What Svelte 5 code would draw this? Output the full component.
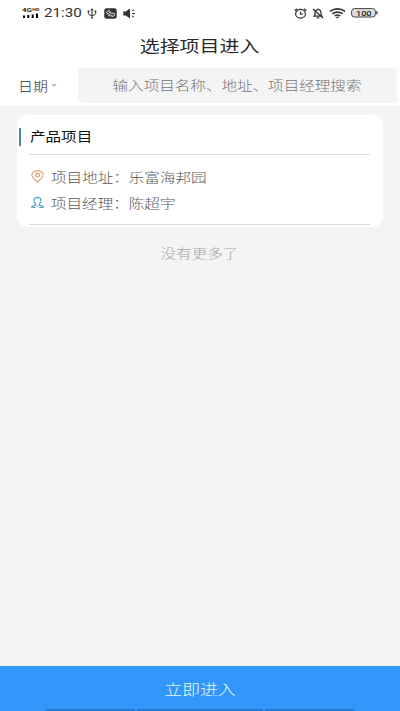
<script>
  const project = {
    name: '产品项目',
    address: '乐富海邦园',
    manager: '陈超宇'
  };
</script>

<main class="screen">
  <header class="status">
    <svg class="signal" width="18" height="12" viewBox="0 0 18 12">
      <text x="0" y="5" font-size="5.6" font-weight="700" textLength="10" lengthAdjust="spacingAndGlyphs">4G</text>
      <text x="10.3" y="4.2" font-size="4.2" font-weight="700" textLength="7" lengthAdjust="spacingAndGlyphs">HD</text>
      <path d="M1 8.4h2V11H1zM5.3 8h2v3h-2zM9.7 7.4h2V11h-2zM14 6.4h2V11h-2z" />
    </svg>
    <span class="clock"><span>21:30</span></span>
    <svg class="usb" width="10" height="11" viewBox="0 0 10 11" fill="none" stroke="#333" stroke-width="1">
      <path d="M5 1v9M1.4 3.5v2.2q0 1.6 3.6 1.8M8.6 3.5v2.2Q8.6 7.3 5 7.5" />
      <path d="M3.8 2.2 5 .5l1.2 1.7zM.8 2.8h1.4v1H.8zM7.8 2.8h1.4v1H7.8zM4.3 9.3h1.4v1H4.3z" fill="#333" stroke-width=".4" />
    </svg>
    <svg class="app" width="13" height="11" viewBox="0 0 13 11">
      <rect x=".3" y=".3" width="12.4" height="10.4" rx="2.3" fill="#333" />
      <g fill="none" stroke="#ddd" stroke-width=".9">
        <path d="M2.5 5.2Q2.7 2.6 5 2.5q1.6.3 1.4 2.6L4.6 3.8M2.4 5.2l3 .8.6 2.2M6.4 5.1l3.9.2q.8 1.7-.6 2.9-1.8.8-2.9-.6l1.9-.7M4 6.6l1 1.8" />
      </g>
    </svg>
    <svg class="sound" width="13" height="11" viewBox="0 0 13 11" fill="#333">
      <path d="M.3 3.5h2.4L7 .5v10l-4.3-3H.3z" />
      <path d="M8.8 3 11 1.7M9 5.5h3M8.8 8 11 9.3" fill="none" stroke="#333" stroke-width="1" />
    </svg>
    <span class="grow"></span>
    <svg class="alarm" width="13" height="11" viewBox="0 0 13 11" fill="none" stroke="#333" stroke-width="1.2">
      <ellipse cx="6.5" cy="5.8" rx="4.9" ry="4.4" />
      <path d="M6.5 3.4v2.7h2.3M.6 2.8 3 .8M12.4 2.8 10 .8" />
    </svg>
    <svg class="bell" width="12" height="11" viewBox="0 0 12 11" fill="none" stroke="#333" stroke-width="1.2">
      <path d="M2 8.2h8L9 6.8V4.5Q9 1.8 6 1.5 3 1.8 3 4.5v2.3zM4.8 9.8h2.4M6 .4v1M.9 1l10.2 9" />
    </svg>
    <svg class="wifi" width="17" height="11" viewBox="0 0 17 11" fill="none" stroke="#333" stroke-width="1.6">
      <path d="M.8 3.4q7.7-5 15.4 0M3.3 5.7q5.2-3.2 10.4 0M5.7 7.9q2.8-1.7 5.6 0" />
      <path d="m6.8 9 1.7 1.6L10.2 9q-1.7-.8-3.4 0z" fill="#333" stroke="none" />
    </svg>
    <svg class="battery" width="27" height="10" viewBox="0 0 27 10">
      <rect x=".6" y=".6" width="23.8" height="8.4" rx="2.8" fill="#dedede" stroke="#444" />
      <path d="M25.2 3h1.3v3.6h-1.3z" fill="#444" />
      <text x="5" y="7.7" font-size="7.8" font-weight="500" textLength="15.5" lengthAdjust="spacingAndGlyphs">100</text>
    </svg>
  </header>

  <h1><span>选择项目进入</span></h1>

  <section class="search">
    <button class="date"><span>日期</span><i></i></button>
    <div class="field"><span>输入项目名称、地址、项目经理搜索</span></div>
  </section>

  <section class="list">
    <article>
      <h2><b></b><span>{project.name}</span></h2>
      <div class="details">
        <div class="row">
          <svg width="13" height="13" viewBox="0 0 13 13" fill="none" stroke="#d79b6c" stroke-width="1.1">
            <path d="M6.5 12.1 2.4 8.2Q.8 6.5.9 4.9 1.3.9 6.5.8q5.2.1 5.6 4.1.1 1.6-1.5 3.3z" />
            <ellipse cx="6.5" cy="5.1" rx="2" ry="1.7" />
          </svg>
          <span>项目地址：{project.address}</span>
        </div>
        <div class="row">
          <svg width="13" height="13" viewBox="0 0 13 13" fill="none" stroke="#5a9fc4" stroke-width="1.1">
            <path d="M4.7 7.8Q2.9 6.5 2.9 4.2 3.2 1.5 6.5 1.4q3.3.1 3.6 2.8 0 2.3-1.8 3.6M4.7 7.8v1.3L.8 10.3v1.1h3.7M8.3 7.8v1.3l3.9 1.2v1.1H8.5" />
            <path d="m5.2 9.5 1.3 1.4 1.3-1.4" stroke-width=".8" />
          </svg>
          <span>项目经理：{project.manager}</span>
        </div>
      </div>
    </article>
    <p><span>没有更多了</span></p>
  </section>

  <button class="enter">
    <span>立即进入</span>
    <div class="edge"><i></i><i></i><i></i></div>
  </button>
</main>

<style>
  :global(body) { background: #f4f4f4; }
  .screen {
    width: 400px;
    height: 711px;
    display: flex;
    flex-direction: column;
    overflow: hidden;
    background: #f4f4f4;
    font-family: "Noto Sans CJK SC", sans-serif;
    font-weight: 300;
  }
  button {
    border: 0;
    padding: 0;
    font: inherit;
  }
  svg { flex: none; display: block; }
  span { white-space: nowrap; }
  .status {
    box-sizing: border-box;
    height: 27px;
    flex: none;
    display: flex;
    align-items: center;
    padding: 0 22px 1px;
    background: #fff;
  }
  .status text {
    font-family: Roboto, sans-serif;
    fill: #222;
  }
  .clock {
    width: 38px;
    margin: 0 5px 0 4px;
    font: 400 13px/26px Roboto, sans-serif;
    color: #333;
  }
  .clock span {
    display: block;
    width: 32px;
    transform: scaleX(1.17);
    transform-origin: left;
  }
  .app { margin-left: 7px; }
  .sound { margin-left: 6px; }
  .grow { flex: 1; }
  .bell { margin-left: 5px; }
  .wifi { margin: 0 5px 0 5px; }
  h1 {
    flex: none;
    height: 38px;
    margin: 0;
    background: #fff;
    color: #2a2a2a;
    font-size: 16.2px;
    font-weight: 400;
    line-height: 37px;
    text-align: center;
  }
  h1 span, .field span, p span, .enter span {
    display: inline-block;
    transform: scaleX(1.232);
  }
  .search {
    box-sizing: border-box;
    height: 41px;
    flex: none;
    display: flex;
    padding: 3px 3px 3px 18px;
    background: #fff;
  }
  .date {
    width: 60px;
    display: flex;
    align-items: center;
    background: none;
    color: #333;
    font-size: 13px;
  }
  .date span {
    width: 33px;
    text-align: left;
    transform: scaleX(1.15);
    transform-origin: left;
  }
  .date i {
    border: 3.5px solid transparent;
    border-top: 3.5px solid #bbb;
    border-bottom: 0;
  }
  .field {
    flex: 1;
    border-radius: 4px;
    background: #f4f4f4;
    color: #757575;
    font-size: 13px;
    line-height: 34px;
    text-align: center;
  }
  .field span { transform: scaleX(1.197); }
  .list {
    flex: 1;
    padding: 9px 17px 0;
  }
  article {
    box-sizing: border-box;
    height: 112px;
    padding: 0 13px 2px 12px;
    border-radius: 10px;
    background: #fff;
  }
  h2 {
    height: 39px;
    margin: 0;
    display: flex;
    align-items: center;
    border-bottom: 1px solid #d9dadb;
    color: #111;
    font-size: 13px;
    font-weight: 400;
  }
  h2 b {
    width: 2px;
    height: 18px;
    margin: 4px 9px 0 -10px;
    background: #4787a1;
  }
  h2 span {
    padding-top: 2px;
    transform: scaleX(1.197);
    transform-origin: left;
  }
  .details {
    height: 70px;
    box-sizing: border-box;
    padding-top: 9px;
    border-bottom: 1px solid #d9dadb;
  }
  .row {
    height: 26px;
    display: flex;
    align-items: center;
    gap: 7px;
    padding-left: 2px;
    color: #585858;
    font-size: 13px;
  }
  .row svg { margin-top: -1px; }
  .row span {
    padding-bottom: 2px;
    transform: scaleX(1.197);
    transform-origin: left;
  }
  p {
    margin: 14px 0 0;
    color: #a5a5a5;
    font-size: 13px;
    line-height: 23px;
    text-align: center;
  }
  p span { transform: scaleX(1.197); }
  .enter {
    height: 45px;
    flex: none;
    display: flex;
    flex-direction: column;
    align-items: center;
    background: #3296fa;
    color: #e5fbff;
    font-size: 14.5px;
    line-height: 43px;
  }
  .enter span {
    height: 42px;
    padding-top: 1px;
  }
  .edge {
    width: 310px;
    height: 2px;
    display: flex;
    gap: 2px;
  }
  .edge i {
    flex: 1;
    background: #2479d2;
  }
  .edge i:first-child, .edge i:last-child { flex: 0 0 90px; }
</style>
